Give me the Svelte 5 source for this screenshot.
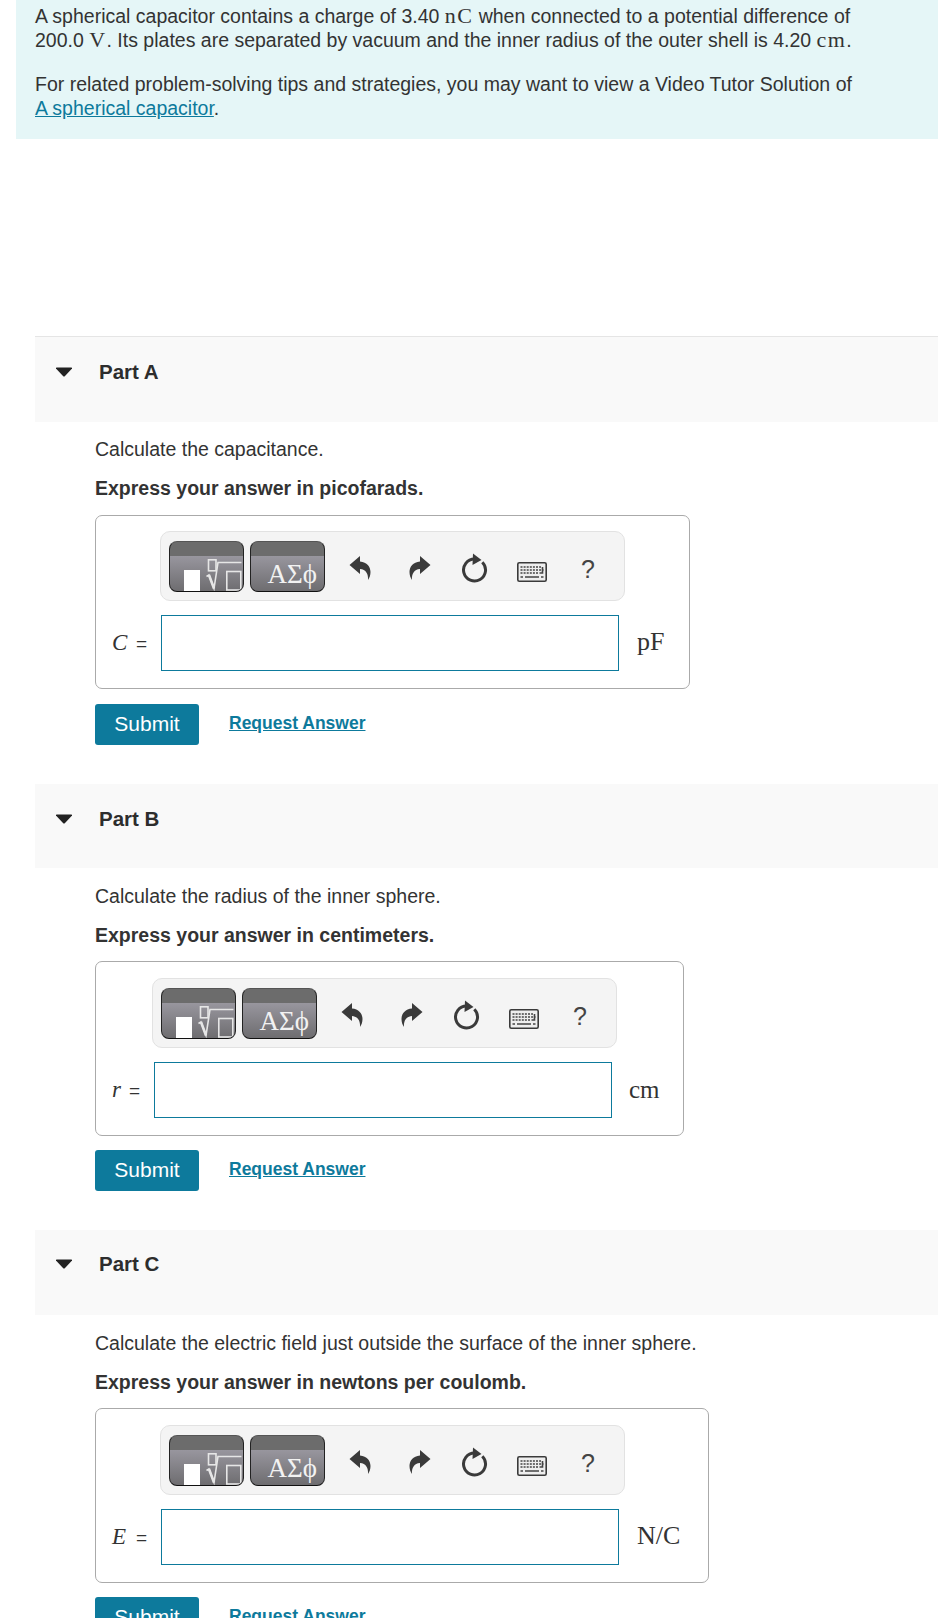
<script>
  const parts = [
    { name: 'Part A', cls: 'a', q: 'Calculate the capacitance.', unitText: 'picofarads', label: 'C', unit: 'pF' },
    { name: 'Part B', cls: 'b', q: 'Calculate the radius of the inner sphere.', unitText: 'centimeters', label: 'r', unit: 'cm' },
    { name: 'Part C', cls: 'c', q: 'Calculate the electric field just outside the surface of the inner sphere.', unitText: 'newtons per coulomb', label: 'E', unit: 'N/C' }
  ];
</script>

<div class="page">
  <section class="intro">
    <p>A spherical capacitor contains a charge of 3.40 <span class="m">nC</span> when connected to a potential difference of<br />200.0 <span class="m">V</span>. Its plates are separated by vacuum and the inner radius of the outer shell is 4.20 <span class="m">cm</span>.</p>
    <p class="tip">For related problem-solving tips and strategies, you may want to view a Video Tutor Solution of<br /><a href="#a">A spherical capacitor</a>.</p>
  </section>

  <div class="parts">
    {#each parts as p}
      <section class="part {p.cls}">
        <header class="head">
          <svg class="caret" width="18" height="10" viewBox="0 0 18 10"><path d="M1 1.5 Q0.5 0.5 2 0.5 H16 Q17.5 0.5 17 1.5 L10 9 Q9 10 8 9 Z" fill="#222"/></svg>
          <h2>{p.name}</h2>
        </header>
        <div class="body">
          <p class="q">{p.q}</p>
          <p class="ex">Express your answer in {p.unitText}.</p>
          <div class="box">
            <div class="toolbar">
              <div class="tbtn tpl">
                <span class="solid"></span>
                <svg class="root" width="40" height="34" viewBox="0 0 40 34" fill="none" stroke="#e6e6e6" stroke-width="1.6">
                  <rect x="2.5" y="0.8" width="7.5" height="11"/>
                  <path d="M0.5 17.5 L3 16 L8 29.5 L12 3.5 H35.5"/>
                  <path d="M3 16 L8 29.5" stroke-width="2.6"/>
                  <rect x="20.8" y="12.5" width="14" height="18.5"/>
                </svg>
              </div>
              <div class="tbtn greek"><span>ΑΣϕ</span></div>
              <svg class="ic undo" width="22" height="26" viewBox="0 0 22 26"><path d="M0.5 10 L11 1 V6.5 C18 7 21.5 12 21.5 17 C21.5 20 20.5 23 19 25 C19.5 19 17 14.5 11 14 V19 Z" fill="#3a3a3a"/></svg>
              <svg class="ic redo" width="22" height="26" viewBox="0 0 22 26"><path d="M21.5 10 L11 1 V6.5 C4 7 0.5 12 0.5 17 C0.5 20 1.5 23 3 25 C2.5 19 5 14.5 11 14 V19 Z" fill="#3a3a3a"/></svg>
              <svg class="ic reload" width="26" height="30" viewBox="0 0 26 30"><path d="M12.5 6 A11 11 0 1 0 20.3 9.2" fill="none" stroke="#3a3a3a" stroke-width="3"/><path d="M11 0.5 L19.5 7 L10.5 12 Z" fill="#3a3a3a"/></svg>
              <svg class="ic kbd" width="30" height="20" viewBox="0 0 30 20"><rect x="0.8" y="0.8" width="28.4" height="18.4" rx="1.5" fill="#eee" stroke="#3a3a3a" stroke-width="1.6"/><path d="M3.5 5 H24 M3.5 8 H26.5 M3.5 11 H21" stroke="#444" stroke-width="1.6" stroke-dasharray="2 1.1"/><path d="M25.5 5 V11 H22.5 M8 15 H22 M3.5 15 H6 M24 15 H26.5" stroke="#444" stroke-width="1.6" fill="none"/></svg>
              <span class="help">?</span>
            </div>
            <div class="row">
              <span class="label"><i>{p.label}</i><b>=</b></span>
              <input class="answer" type="text" aria-label={p.name} />
              <span class="unit">{p.unit}</span>
            </div>
          </div>
          <div class="actions">
            <button>Submit</button>
            <a href="#r">Request Answer</a>
          </div>
        </div>
      </section>
    {/each}
  </div>
</div>

<style>
  :global(body) { margin: 0; background: #fff; }
  .page { height: 1618px; overflow: hidden; font-family: "Liberation Sans", Arial, sans-serif; color: #333; font-size: 19.5px; line-height: 24px; }
  p { margin: 0; }
  .intro { margin-left: 16px; height: 139px; box-sizing: border-box; background: #e5f6f7; padding: 4px 19px 0; white-space: nowrap; }
  .tip { margin-top: 20px; }
  .intro a { color: #0d7a9c; }
  .m { font-family: "Liberation Serif", serif; font-size: 22px; letter-spacing: 1.4px; line-height: 20px; }
  .parts { margin-top: 197px; margin-left: 35px; }
  .head { background: #f9f9f9; display: flex; align-items: flex-start; box-sizing: border-box; padding-left: 20px; }
  .a .head { height: 86px; border-top: 1px solid #e5e5e5; padding-top: 23px; }
  .b .head { height: 84px; padding-top: 23px; }
  .c .head { height: 85px; padding-top: 22px; }
  .caret { margin-top: 7px; }
  h2 { margin: 0 0 0 26px; font-size: 20.5px; font-weight: 700; color: #2d2d2d; line-height: 24px; }
  .body { padding: 16px 0 0 60px; box-sizing: border-box; }
  .a .body { padding-top: 15px; height: 362px; }
  .b .body { height: 362px; }
  .ex { margin-top: 15px; font-weight: 700; }
  .box { margin-top: 14px; box-sizing: border-box; height: 175px; border: 1px solid #aaa; border-radius: 7px; padding: 16px 0 0 16px; width: 595px; }
  .a .box { margin-top: 15px; height: 174px; padding-top: 15px; }
  .b .box { width: 589px; }
  .c .box { width: 614px; }
  .toolbar { margin-left: 48px; width: 465px; height: 70px; box-sizing: border-box; background: #f4f4f4; border: 1px solid #e2e2e2; border-radius: 10px; display: flex; align-items: center; padding-left: 8px; }
  .b .toolbar { margin-left: 40px; }
  .tbtn { position: relative; width: 75px; height: 51px; box-sizing: border-box; border: 1px solid #222; border-color: #555 #222 #111; border-radius: 8px; overflow: hidden; background: linear-gradient(#6c6c6c 0 14px, #98969e 14px, #6e6d70 100%); margin-right: 6px; flex: none; }
  .solid { position: absolute; left: 14px; top: 28px; width: 16px; height: 22px; background: #fff; }
  .root { position: absolute; left: 36px; top: 17px; }
  .greek { display: flex; align-items: flex-end; justify-content: flex-end; margin-right: 0; }
  .greek span { font-family: "Liberation Serif", serif; font-size: 27px; line-height: 28px; color: #f2f2f2; padding: 0 7px 3px 0; white-space: nowrap; }
  .ic { flex: none; margin-top: 4px; }
  .undo { margin-left: 24px; }
  .redo { margin-left: 38px; }
  .reload { margin-left: 31px; }
  .kbd { margin-left: 29px; margin-top: 12px; }
  .help { margin-left: 34px; font-size: 25px; color: #444; margin-top: 6px; }
  .row { margin-top: 14px; display: flex; align-items: center; }
  .label { width: 49px; flex: none; font-family: "Liberation Serif", serif; font-size: 23px; white-space: nowrap; }
  .label i { display: inline-block; min-width: 24px; }
  .b .label { width: 42px; }
  .b .label i { min-width: 17px; }
  .label b { font-family: "Liberation Sans", sans-serif; font-weight: 400; font-size: 19px; }
  .answer { width: 458px; height: 56px; box-sizing: border-box; border: 1px solid #0d7a9c; border-radius: 0; background: #fff; flex: none; padding: 0; margin: 0; }
  .unit { margin-left: 18px; margin-top: -3px; font-family: "Liberation Serif", serif; font-size: 26px; }
  .b .unit { font-size: 25px; margin-left: 17px; margin-top: 0; }
  .actions { margin-top: 14px; display: flex; align-items: center; }
  .a .actions { margin-top: 15px; }
  button { width: 104px; height: 41px; background: #0d7a9c; color: #fff; border: 0; border-radius: 3px; font: 400 21px "Liberation Sans", sans-serif; padding: 0 0 1px; }
  .actions a { margin-left: 30px; margin-top: -3px; font-weight: 700; color: #0d7a9c; font-size: 17.5px; }
</style>
